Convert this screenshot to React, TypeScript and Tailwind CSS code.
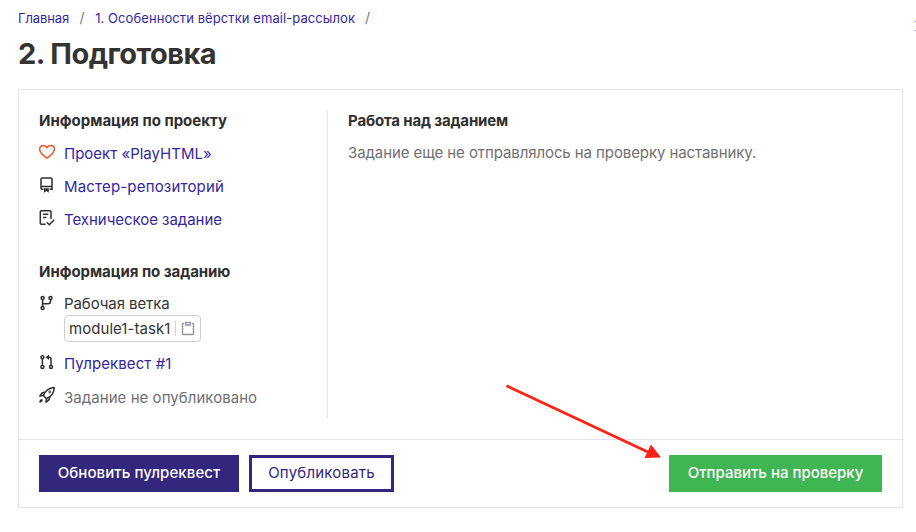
import type { ReactNode } from 'react';

function Icon({ className = 'mb-[3px] text-[#2f2f2f]', children }: { className?: string; children: ReactNode }) {
  return (
    <svg
      className={`block h-[18px] w-[18px] shrink-0 ${className}`}
      viewBox="0 0 18 18"
      fill="none"
      stroke="currentColor"
      strokeWidth="1.5"
    >
      {children}
    </svg>
  );
}

function Heading({ children, className = '' }: { children: ReactNode; className?: string }) {
  return <h2 className={`text-[15px] leading-[22px] font-bold text-[#2f2f2f] ${className}`}>{children}</h2>;
}

function Item({ icon, children, className = '' }: { icon: ReactNode; children: ReactNode; className?: string }) {
  return (
    <li className={`flex h-[33px] items-center gap-[8px] whitespace-nowrap ${className}`}>
      {icon}
      {children}
    </li>
  );
}

const link = 'text-[#3527a0]';

export default function App() {
  return (
    <div className="relative h-[532px] w-[916px] overflow-hidden bg-white font-['Inter','Liberation_Sans',sans-serif] text-[15px] leading-[22px] text-[#333333]">
      <header className="flex flex-col pl-[18px]">
        <nav className="flex h-[36px] items-center text-[13px] leading-[20px] whitespace-nowrap">
          <a className={`tracking-[-0.1px] ${link}`}>Главная</a>
          <span className="w-[26px] text-center text-[14px] text-[#777777]">/</span>
          <a className={`tracking-[0.08px] ${link}`}>1. Особенности вёрстки email-рассылок</a>
          <span className="w-[25px] text-center text-[14px] text-[#777777]">/</span>
        </nav>
        <h1 className="h-[53px] text-[29px] leading-[36px] font-bold tracking-[-0.55px] text-[#333333]">
          2. Подготовка
        </h1>
      </header>

      <main className="ml-[18px] flex h-[419px] w-[885px] flex-col border border-[#e4e4e4]">
        <div className="flex h-[349px] pt-[20px] pb-[20px]">
          <section className="w-[309px] border-r border-[#e4e4e4] pl-[19px]">
            <Heading className="pl-px">Информация по проекту</Heading>
            <ul className="mt-[5px]">
              <Item
                icon={
                  <Icon className="mb-[3px] text-[#f0522d]">
                    <path d="M9 15.2C5.500 12.700 1.600 9.800 1.600 6.200c0-2.200 1.600-3.800 3.600-3.800 1.600 0 3 .8 3.800 2.300.8-1.500 2.200-2.300 3.800-2.300 2 0 3.600 1.600 3.600 3.800 0 3.600-3.900 6.500-7.400 9Z" />
                  </Icon>
                }
              >
                <a className={link}>Проект «PlayHTML»</a>
              </Item>
              <Item
                icon={
                  <Icon>
                    <path d="M5.500 13.200H4a1 1 0 0 1-1-1V2.900a1 1 0 0 1 1-1h9a1 1 0 0 1 1 1v10.300h-2.500M3 10.400h11" />
                    <path d="M6 12.200h4.800v4.600L8.400 15.100 6 16.800Z" fill="currentColor" stroke="none" />
                  </Icon>
                }
              >
                <a className={`tracking-[0.18px] ${link}`}>Мастер-репозиторий</a>
              </Item>
              <Item
                icon={
                  <Icon>
                    <path d="M7.500 15.200H3.300a1 1 0 0 1-1-1V2.700a1 1 0 0 1 1-1h8.700a1 1 0 0 1 1 1v7.200M5 5.300h5.300M5 8.400h3.500M8.700 13.200l2.600 2.500 5-5" />
                  </Icon>
                }
              >
                <a className={`tracking-[-0.04px] ${link}`}>Техническое задание</a>
              </Item>
            </ul>

            <Heading className="mt-[25px] pl-px tracking-[-0.05px]">Информация по заданию</Heading>
            <ul className="mt-[5px]">
              <li className="flex h-[59px] gap-[8px] whitespace-nowrap">
                <div className="pt-[6px]">
                  <Icon className="text-[#2f2f2f]">
                    <circle cx="4.600" cy="4.100" r="1.500" />
                    <circle cx="12.500" cy="4.100" r="1.500" />
                    <circle cx="4.600" cy="14" r="1.500" />
                    <path d="M4.600 5.600v6.900M4.600 9.800H10a2.500 2.500 0 0 0 2.500-2.500V5.600" />
                  </Icon>
                </div>
                <div className="pt-[5px]">
                  <p className="tracking-[-0.08px]">Рабочая ветка</p>
                  <div className="flex h-[27px] w-[137px] items-center rounded-[4px] border border-[#cfcfcf] pl-[4px]">
                    <span className="w-[106px] tracking-[0.05px]">module1-task1</span>
                    <span className="h-[15px] w-px bg-[#d2d2d2]" />
                    <svg className="ml-[5px] h-[15px] w-[14px]" viewBox="0 0 14 15" fill="none" stroke="#9697a0">
                      <path d="M3 2.500H2.400c-.5 0-.9.300-.9.800v9.400c0 .5.400.8.900.8h9.200c.5 0 .9-.3.900-.8V3.300c0-.5-.4-.8-.9-.8H11" strokeWidth="1.500" />
                      <path d="M4.600 1.400h4.800v2.700H4.600Z" strokeWidth="1.500" />
                    </svg>
                  </div>
                </div>
              </li>
              <Item
                icon={
                  <Icon>
                    <circle cx="4.400" cy="4.300" r="1.500" />
                    <circle cx="4.400" cy="14" r="1.500" />
                    <circle cx="13" cy="14" r="1.500" />
                    <path d="M4.400 5.800v6.700M13 12.500V6.300a2 2 0 0 0-2-2H9.500" />
                    <path d="M11 1.700v5.200L7.500 4.300Z" fill="currentColor" stroke="none" />
                  </Icon>
                }
              >
                <a className={`tracking-[0.1px] ${link}`}>Пулреквест #1</a>
              </Item>
              <Item
                className="mt-px"
                icon={
                  <Icon className="mb-[5px] text-[#2f2f2f]">
                    <path d="M5.500 9.500C7 5.200 10.300 2 16.200 1.500c.1 5.300-3 9-7.700 11.200Z" strokeLinejoin="round" />
                    <path d="M7 6.200 4.200 6.800 1.800 10l3.700-.5M11.800 10.600l-.6 3L8 16.200l.5-3.500" strokeLinejoin="round" />
                    <circle cx="11.800" cy="5.900" r="1" strokeWidth="1" />
                    <path d="M1.200 16.800c.1-2 .9-3.500 2.300-3.700 1.100-.1 1.600.9 1 1.900-.6 1.100-1.600 1.500-3.300 1.800Z" fill="currentColor" stroke="none" />
                  </Icon>
                }
              >
                <span className="tracking-[0.05px] text-[#707070]">Задание не опубликовано</span>
              </Item>
            </ul>
          </section>

          <section className="pl-[20px] whitespace-nowrap">
            <Heading className="tracking-[-0.15px]">Работа над заданием</Heading>
            <p className="mt-[10px] tracking-[-0.085px] text-[#707070]">
              Задание еще не отправлялось на проверку наставнику.
            </p>
          </section>
        </div>

        <footer className="flex h-[68px] items-start border-t border-[#e4e4e4] pt-[15px] pr-[20px] pl-[20px] whitespace-nowrap">
          <button className="h-[37px] w-[200px] bg-[#33267d] pb-px font-medium tracking-[0.08px] text-white">
            Обновить пулреквест
          </button>
          <button className="ml-[10px] h-[37px] w-[145px] border-3 border-[#33267d] pb-px tracking-[0.2px] text-[#33267d]">
            Опубликовать
          </button>
          <button className="ml-auto h-[37px] w-[213px] bg-[#40b553] pb-px font-medium text-white">
            Отправить на проверку
          </button>
        </footer>
      </main>

      <svg className="absolute top-[380px] left-[500px] h-[84px] w-[166px]" viewBox="0 0 166 84">
        <path d="M6.500 5.700 150 73" stroke="#ff2116" strokeWidth="2.700" />
        <path d="M151 64.500 161 77.500 144.500 78Z" fill="#ff2116" />
      </svg>
      <div className="absolute top-[21px] right-0 h-[10px] w-px border-y border-[#8580b5]" />
    </div>
  );
}
